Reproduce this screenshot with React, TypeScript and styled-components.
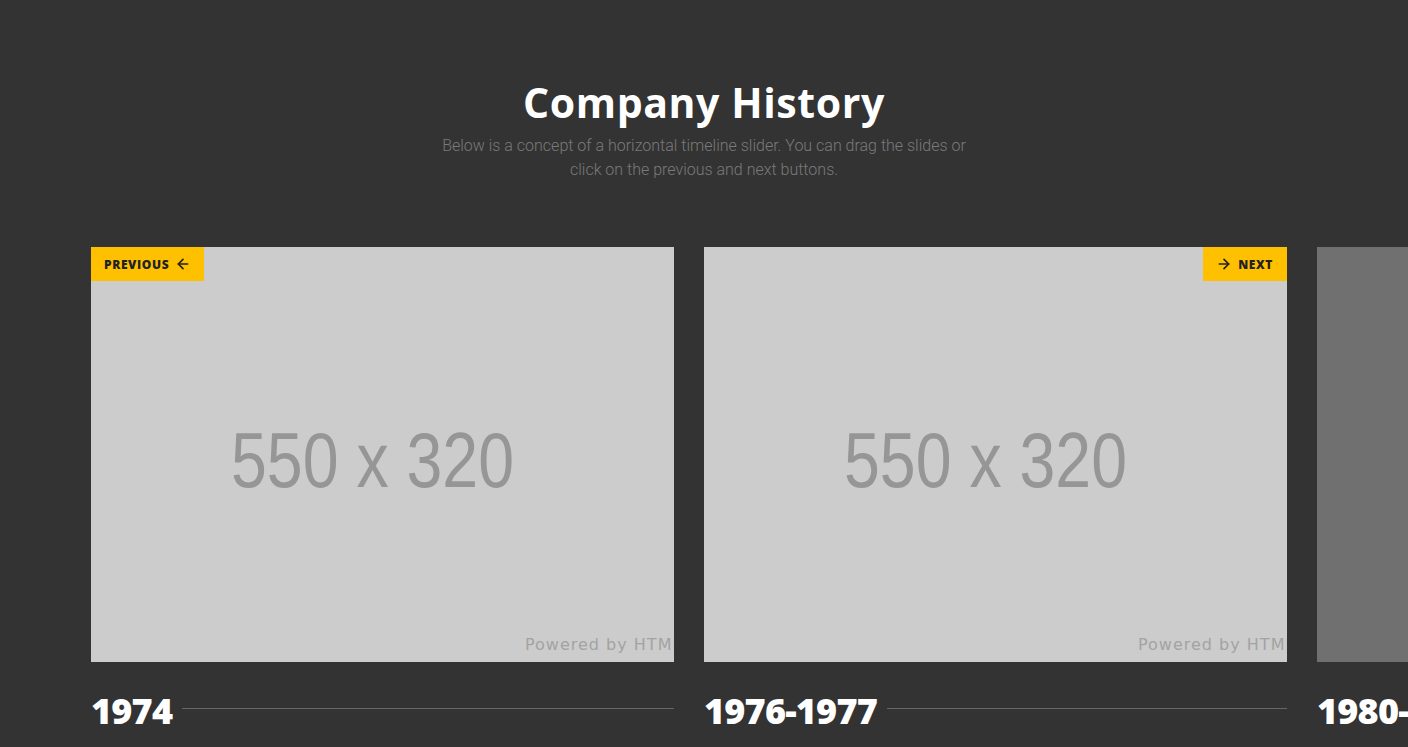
import React from 'react';
import styled, { createGlobalStyle } from 'styled-components';
import { ArrowLeft, ArrowRight } from 'lucide-react';

const GlobalStyle = createGlobalStyle`
  html, body {
    margin: 0;
    padding: 0;
    background: #333333;
    overflow: hidden;
  }
  * { box-sizing: border-box; }
`;

const Page = styled.section`
  width: 1408px;
  height: 747px;
  padding-top: 77px;
  background: #333333;
  overflow: hidden;
`;

const Header = styled.header`
  display: flex;
  flex-direction: column;
  align-items: center;
  text-align: center;
`;

const Title = styled.h1`
  margin: 0;
  font-family: 'Open Sans', 'DejaVu Sans', sans-serif;
  font-weight: 700;
  font-size: 41px;
  line-height: 50px;
  letter-spacing: 0.6px;
  color: #ffffff;
`;

const Lead = styled.p`
  margin: 7px 0 0;
  width: 540px;
  font-family: Roboto, 'Liberation Sans', sans-serif;
  font-weight: 300;
  font-size: 16px;
  line-height: 24px;
  color: #7a7a7a;
`;

const Track = styled.div`
  display: flex;
  gap: 30px;
  margin-top: 65px;
  padding-left: 91px;
`;

const Slide = styled.article`
  flex: 0 0 583px;
  display: flex;
  flex-direction: column;
`;

const Media = styled.div<{ $dim?: boolean }>`
  position: relative;
  height: 415px;
  background: #cccccc;
  overflow: hidden;
  opacity: ${({ $dim }) => ($dim ? 0.4 : 1)};

  svg.ph {
    display: block;
  }
`;

const NavButton = styled.button<{ $side: 'left' | 'right' }>`
  position: absolute;
  top: 0;
  ${({ $side }) => ($side === 'left' ? 'left: 0;' : 'right: 0;')}
  height: 34px;
  display: flex;
  align-items: center;
  gap: 6px;
  padding: ${({ $side }) => ($side === 'left' ? '0 13px 0 13px' : '0 14px 0 13px')};
  border: 0;
  background: #ffc000;
  color: #222222;
  font-family: 'Open Sans', 'DejaVu Sans', sans-serif;
  font-weight: 800;
  font-size: 12px;
  letter-spacing: 0.6px;
  cursor: pointer;
`;

const YearRow = styled.div`
  display: flex;
  align-items: center;
  gap: 10px;
  margin-top: 26px;
`;

const Year = styled.h2`
  margin: 0;
  font-family: 'Open Sans', 'DejaVu Sans', sans-serif;
  font-weight: 800;
  font-size: 36px;
  line-height: 46px;
  letter-spacing: -0.8px;
  color: #ffffff;
  white-space: nowrap;
`;

const Rule = styled.span`
  flex: 1;
  height: 1px;
  margin-top: -5px;
  background: #666666;
`;

const Placeholder = () => (
  <svg className="ph" width="583" height="415" viewBox="0 0 583 415">
    <text
      x="140"
      y="240"
      fontFamily="'Liberation Sans', Arial, sans-serif"
      fontSize="78"
      fill="#969696"
      textLength="283"
      lengthAdjust="spacingAndGlyphs"
    >
      550 x 320
    </text>
    <text
      x="434"
      y="403"
      fontFamily="'DejaVu Sans', Verdana, sans-serif"
      fontSize="16"
      fill="#a3a3a3"
      letterSpacing="1"
    >
      Powered by HTML.COM
    </text>
  </svg>
);

const slides = [
  { year: '1974', nav: 'prev' as const },
  { year: '1976-1977', nav: 'next' as const },
  { year: '1980-1985', nav: null, dim: true },
];

export default function App() {
  return (
    <>
      <GlobalStyle />
      <Page>
        <Header>
          <Title>Company History</Title>
          <Lead>
            Below is a concept of a horizontal timeline slider. You can drag the slides or click on
            the previous and next buttons.
          </Lead>
        </Header>
        <Track>
          {slides.map((s) => (
            <Slide key={s.year}>
              <Media $dim={s.dim}>
                <Placeholder />
                {s.nav === 'prev' && (
                  <NavButton $side="left">
                    PREVIOUS <ArrowLeft size={16} strokeWidth={2.5} />
                  </NavButton>
                )}
                {s.nav === 'next' && (
                  <NavButton $side="right">
                    <ArrowRight size={16} strokeWidth={2.5} /> NEXT
                  </NavButton>
                )}
              </Media>
              <YearRow>
                <Year>{s.year}</Year>
                <Rule />
              </YearRow>
            </Slide>
          ))}
        </Track>
      </Page>
    </>
  );
}
